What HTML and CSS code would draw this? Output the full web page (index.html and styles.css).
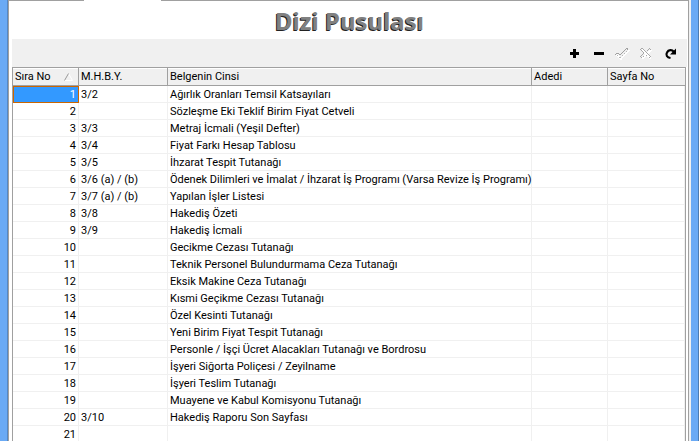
FILE: index.html
```html
<!DOCTYPE html>
<html lang="tr">
<head>
    <meta charset="UTF-8">
    <meta name="viewport" content="width=device-width, initial-scale=1.0">
    <title>Dizi Pusulası</title>
    <link rel="stylesheet" href="styles.css">
</head>
<body>
    <div class="window">
        <div class="tab-gap"></div>
        <h1 class="title">Dizi Pusulası</h1>

        <div class="toolbar">
            <button type="button" class="tool" aria-label="Ekle">
                <svg width="16" height="16" viewBox="0 0 16 16"><path d="M8.500 4v9M4 8.500h9" stroke="#000" stroke-width="3" fill="none"/></svg>
            </button>
            <button type="button" class="tool" aria-label="Sil">
                <svg width="16" height="16" viewBox="0 0 16 16"><path d="M4 8.500h10" stroke="#000" stroke-width="3" fill="none"/></svg>
            </button>
            <button type="button" class="tool" aria-label="Kaydet" disabled>
                <svg width="16" height="16" viewBox="0 0 16 16" shape-rendering="crispEdges"><path d="M3 10l4 4 8-9" stroke="#fff" stroke-width="1.500" fill="none"/><path d="M2 8.500h3M1 9.500h1M5 9.500h2M7 8.500h1M8 7.500h1M9 6.500h1M10 5.500h1M11 4.500h1M12 3.500h2M13 4.500h1" stroke="#a0a0a0" fill="none"/><path d="M12 6.500h1M10 8.500h1M8 10.500h1M5 12.500h2M3 10.500h1" stroke="#b8b8b8" fill="none"/></svg>
            </button>
            <button type="button" class="tool" aria-label="İptal" disabled>
                <svg width="16" height="16" viewBox="0 0 16 16" shape-rendering="crispEdges"><path d="M4 5l9 9M13 5l-9 9" stroke="#fff" stroke-width="2" fill="none"/><path d="M3 3.500h2M2 4.500h1M5 4.500h1M3 5.500h1M6 5.500h1M4 6.500h1M7 6.500h1M5 7.500h1M11 3.500h1M10 4.500h1M12 4.500h1M9 5.500h1M8 7.500h1M5 8.500h1M4 9.500h1M3 10.500h1M2 11.500h1M3 12.500h1M5 11.500h1M9 8.500h1M10 9.500h1M11 10.500h1M12 11.500h1M11 12.500h1M8 10.500h1" stroke="#a8a8a8" fill="none"/></svg>
            </button>
            <button type="button" class="tool" aria-label="Yenile">
                <svg width="16" height="16" viewBox="0 0 16 16"><path d="M8.500 13C5 12.500 3.500 10 5 7.500C6.500 4.500 10 4.500 12 7" stroke="#000" stroke-width="2.200" fill="none"/><path d="M14 3.500v6H8z"/></svg>
            </button>
        </div>

        <table class="grid">
            <colgroup>
                <col class="col-no">
                <col class="col-mhby">
                <col class="col-name">
                <col class="col-count">
                <col class="col-page">
            </colgroup>
            <thead>
                <tr>
                    <th>
                        <div class="sorted">Sıra No
                            <svg width="9" height="8" viewBox="0 0 9 8"><path d="M4.500 .5L8.500 7.500H.5" stroke="#fff" fill="none"/><path d="M.5 7.500L4.500 .5" stroke="#999" fill="none"/></svg>
                        </div>
                    </th>
                    <th>M.H.B.Y.</th>
                    <th>Belgenin Cinsi</th>
                    <th>Adedi</th>
                    <th>Sayfa No</th>
                </tr>
            </thead>
            <tbody>
                <tr><td class="selected">1</td><td>3/2</td><td>Ağırlık Oranları Temsil Katsayıları</td><td></td><td></td></tr>
                <tr><td>2</td><td></td><td>Sözleşme Eki Teklif Birim Fiyat Cetveli</td><td></td><td></td></tr>
                <tr><td>3</td><td>3/3</td><td>Metraj İcmali (Yeşil Defter)</td><td></td><td></td></tr>
                <tr><td>4</td><td>3/4</td><td>Fiyat Farkı Hesap Tablosu</td><td></td><td></td></tr>
                <tr><td>5</td><td>3/5</td><td>İhzarat Tespit Tutanağı</td><td></td><td></td></tr>
                <tr><td>6</td><td>3/6 (a) / (b)</td><td>Ödenek Dilimleri ve İmalat / İhzarat İş Programı (Varsa Revize İş Programı)</td><td></td><td></td></tr>
                <tr><td>7</td><td>3/7 (a) / (b)</td><td>Yapılan İşler Listesi</td><td></td><td></td></tr>
                <tr><td>8</td><td>3/8</td><td>Hakediş Özeti</td><td></td><td></td></tr>
                <tr><td>9</td><td>3/9</td><td>Hakediş İcmali</td><td></td><td></td></tr>
                <tr><td>10</td><td></td><td>Gecikme Cezası Tutanağı</td><td></td><td></td></tr>
                <tr><td>11</td><td></td><td>Teknik Personel Bulundurmama Ceza Tutanağı</td><td></td><td></td></tr>
                <tr><td>12</td><td></td><td>Eksik Makine Ceza Tutanağı</td><td></td><td></td></tr>
                <tr><td>13</td><td></td><td>Kısmi Geçikme Cezası Tutanağı</td><td></td><td></td></tr>
                <tr><td>14</td><td></td><td>Özel Kesinti Tutanağı</td><td></td><td></td></tr>
                <tr><td>15</td><td></td><td>Yeni Birim Fiyat Tespit Tutanağı</td><td></td><td></td></tr>
                <tr><td>16</td><td></td><td>Personle / İşçi Ücret Alacakları Tutanağı ve Bordrosu</td><td></td><td></td></tr>
                <tr><td>17</td><td></td><td>İşyeri Siğorta Poliçesi / Zeyilname</td><td></td><td></td></tr>
                <tr><td>18</td><td></td><td>İşyeri Teslim Tutanağı</td><td></td><td></td></tr>
                <tr><td>19</td><td></td><td>Muayene ve Kabul Komisyonu Tutanağı</td><td></td><td></td></tr>
                <tr><td>20</td><td>3/10</td><td>Hakediş Raporu Son Sayfası</td><td></td><td></td></tr>
                <tr><td>21</td><td></td><td></td><td></td><td></td></tr>
            </tbody>
        </table>
    </div>
</body>
</html>
```

FILE: styles.css
```css
* {
    box-sizing: border-box;
}
body {
    margin: 0;
    height: 100vh;
    overflow: hidden;
    padding: 0 7px 0 7px;
    background: #6aaaf5;
    border-right: 1px solid #4d7cb3;
    font-family: Tahoma, Roboto, "DejaVu Sans Condensed", sans-serif;
    font-size: 11px;
    color: #000;
}
.window {
    position: relative;
    height: 100%;
    padding: 0 1px 0 3px;
    background: #fff;
    border: 1px solid #a0a0a0;
    border-bottom: 0;
    margin-left: 1px;
    margin-right: 2px;
    box-shadow: 1px 0 0 1px #f0f0f0, -1px 0 0 0 #5488c6;
}
/* open edge under the active tab */
.tab-gap {
    position: absolute;
    top: -1px;
    left: 75px;
    width: 77px;
    height: 1px;
    background: #fff;
}
.title {
    margin: 0;
    height: 38px;
    line-height: 40px;
    text-align: center;
    font-family: Tahoma, "Noto Sans", sans-serif;
    font-size: 24px;
    color: #808080;
    text-shadow: -1px 1px 0 #222;
}
.toolbar {
    display: flex;
    justify-content: flex-end;
    align-items: center;
    gap: 8px;
    height: 28px;
    padding-right: 9px;
    background: #f0f0f0;
}
.tool {
    width: 16px;
    height: 16px;
    padding: 0;
    border: 0;
    background: none;
}
.tool svg {
    display: block;
}
.grid {
    width: calc(100% - 1px);
    table-layout: fixed;
    border-collapse: separate;
    border-spacing: 0;
    border: 1px solid #a0a0a0;
    border-bottom: 0;
}
.col-no {
    width: 66px;
}
.col-mhby {
    width: 89px;
}
.col-count {
    width: 76px;
}
.col-page {
    width: 77px;
}
.grid th {
    height: 18px;
    padding: 1px 2px 0;
    line-height: 16px;
    background: #f0f0f0;
    border-bottom: 1px solid #a0a0a0;
    border-right: 1px solid #a0a0a0;
    font-weight: normal;
    text-align: left;
    box-shadow: inset 0 1px 0 #fff;
}
.grid th:last-child {
    border-right: 0;
}
.sorted {
    display: flex;
    justify-content: space-between;
    align-items: center;
    padding-right: 3px;
}
.grid td {
    height: 17px;
    padding: 1px 2px 0;
    line-height: 15px;
    border-right: 1px solid #f0f0f0;
    border-bottom: 1px solid #f0f0f0;
    white-space: nowrap;
}
.grid td:first-child {
    text-align: right;
}
.grid td.selected {
    background: #3399ff;
    color: #fff;
    outline: 1px solid #cc6600;
    outline-offset: -1px;
}
```
